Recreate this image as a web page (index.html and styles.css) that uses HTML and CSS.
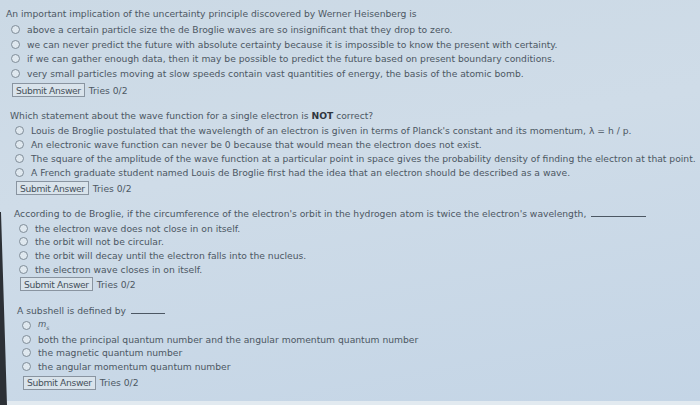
FILE: index.html
```html
<!DOCTYPE html>
<html lang="en">
<head>
  <meta charset="UTF-8" />
  <meta name="viewport" content="width=device-width, initial-scale=1.0"/>
  <title>Quantum Quiz</title>
  <link rel="stylesheet" href="styles.css">
</head>
<body>
  <div class="quiz">

    <!-- Question 1 -->
    <div class="question q1">
      <p class="prompt">An important implication of the uncertainty principle discovered by Werner Heisenberg is</p>
      <ul class="choices">
        <li><span class="radio"></span>above a certain particle size the de Broglie waves are so insignificant that they drop to zero.</li>
        <li><span class="radio"></span>we can never predict the future with absolute certainty because it is impossible to know the present with certainty.</li>
        <li><span class="radio"></span>if we can gather enough data, then it may be possible to predict the future based on present boundary conditions.</li>
        <li><span class="radio"></span>very small particles moving at slow speeds contain vast quantities of energy, the basis of the atomic bomb.</li>
      </ul>
      <div class="submit-row">
        <button type="button">Submit Answer</button>
        <span class="tries">Tries 0/2</span>
      </div>
    </div>

    <!-- Question 2 -->
    <div class="question q2">
      <p class="prompt">Which statement about the wave function for a single electron is <b>NOT</b> correct?</p>
      <ul class="choices">
        <li><span class="radio"></span>Louis de Broglie postulated that the wavelength of an electron is given in terms of Planck's constant and its momentum, &lambda; = h / p.</li>
        <li><span class="radio"></span>An electronic wave function can never be 0 because that would mean the electron does not exist.</li>
        <li><span class="radio"></span>The square of the amplitude of the wave function at a particular point in space gives the probability density of finding the electron at that point.</li>
        <li><span class="radio"></span>A French graduate student named Louis de Broglie first had the idea that an electron should be described as a wave.</li>
      </ul>
      <div class="submit-row">
        <button type="button">Submit Answer</button>
        <span class="tries">Tries 0/2</span>
      </div>
    </div>

    <!-- Question 3 -->
    <div class="question q3">
      <p class="prompt">According to de Broglie, if the circumference of the electron's orbit in the hydrogen atom is twice the electron's wavelength, <span class="blank wide"></span></p>
      <ul class="choices">
        <li><span class="radio"></span>the electron wave does not close in on itself.</li>
        <li><span class="radio"></span>the orbit will not be circular.</li>
        <li><span class="radio"></span>the orbit will decay until the electron falls into the nucleus.</li>
        <li><span class="radio"></span>the electron wave closes in on itself.</li>
      </ul>
      <div class="submit-row">
        <button type="button">Submit Answer</button>
        <span class="tries">Tries 0/2</span>
      </div>
    </div>

    <!-- Question 4 -->
    <div class="question q4">
      <p class="prompt">A subshell is defined by <span class="blank"></span></p>
      <ul class="choices">
        <li><span class="radio"></span><i class="sym">m<sub>s</sub></i></li>
        <li><span class="radio"></span>both the principal quantum number and the angular momentum quantum number</li>
        <li><span class="radio"></span>the magnetic quantum number</li>
        <li><span class="radio"></span>the angular momentum quantum number</li>
      </ul>
      <div class="submit-row">
        <button type="button">Submit Answer</button>
        <span class="tries">Tries 0/2</span>
      </div>
    </div>

  </div>
  <div class="page-end"></div>
</body>
</html>
```

FILE: styles.css
```css
html, body {
  height: 100%;
}

body {
  margin: 0;
  position: relative;
  display: flex;
  flex-direction: column;
  font-family: "DejaVu Sans", Verdana, sans-serif;
  font-size: 9.2px;
  color: #4c5763;
  background: linear-gradient(170deg, #cbd9e5 0%, #cfdce8 40%, #c4d5e6 100%);
  overflow: hidden;
}

/* dark monitor edge on the lower left */
body::before {
  content: "";
  position: absolute;
  left: 0;
  top: 0;
  width: 8px;
  height: 100%;
  background: #2c3036;
  clip-path: polygon(0 212px, 1px 212px, 7px 100%, 0 100%);
}

.quiz {
  flex: 1;
  padding-top: 6px;
}

/* the photo is slightly skewed, so every block sits a bit further right */
.q1 { padding-left: 6px; margin-bottom: 11px; }
.q2 { padding-left: 10px; margin-bottom: 11px; }
.q3 { padding-left: 14px; margin-bottom: 12px; }
.q4 { padding-left: 17px; }

.prompt {
  margin: 0;
  line-height: 15px;
  white-space: nowrap;
}

.prompt b {
  color: #2f3640;
}

.blank {
  display: inline-block;
  width: 34px;
  margin-left: 2px;
  border-bottom: 1px solid #4c5763;
}

.blank.wide {
  width: 55px;
}

.choices {
  list-style: none;
  margin: 0;
  padding: 0 0 0 5px;
}

.choices li {
  display: flex;
  align-items: center;
  height: 13.8px;
  white-space: nowrap;
}

.q1 .choices {
  margin-top: 1px;
}

.q1 .choices li {
  height: 14.8px;
}

.q2 .choices li {
  height: 14px;
}

.radio {
  width: 7px;
  height: 7px;
  margin-right: 7px;
  border: 1px solid #7f8c98;
  border-radius: 50%;
  background: #dfe8ef;
  flex-shrink: 0;
}

.sym {
  font-size: 8.5px;
}

.sym sub {
  font-size: 6px;
}

.submit-row {
  display: flex;
  align-items: center;
  margin: 2px 0 0 6px;
}

.q3 .submit-row {
  margin-top: 1px;
}

button {
  height: 14px;
  padding: 0 3px;
  font-family: "DejaVu Sans", Verdana, sans-serif;
  font-size: 9.2px;
  letter-spacing: -0.35px;
  color: #46515c;
  background: #d9e3eb;
  border: 1px solid #8994a0;
  border-radius: 0;
  cursor: pointer;
}

.tries {
  margin-left: 4px;
}

.page-end {
  height: 4px;
  background: #e2eaf0;
}
```
